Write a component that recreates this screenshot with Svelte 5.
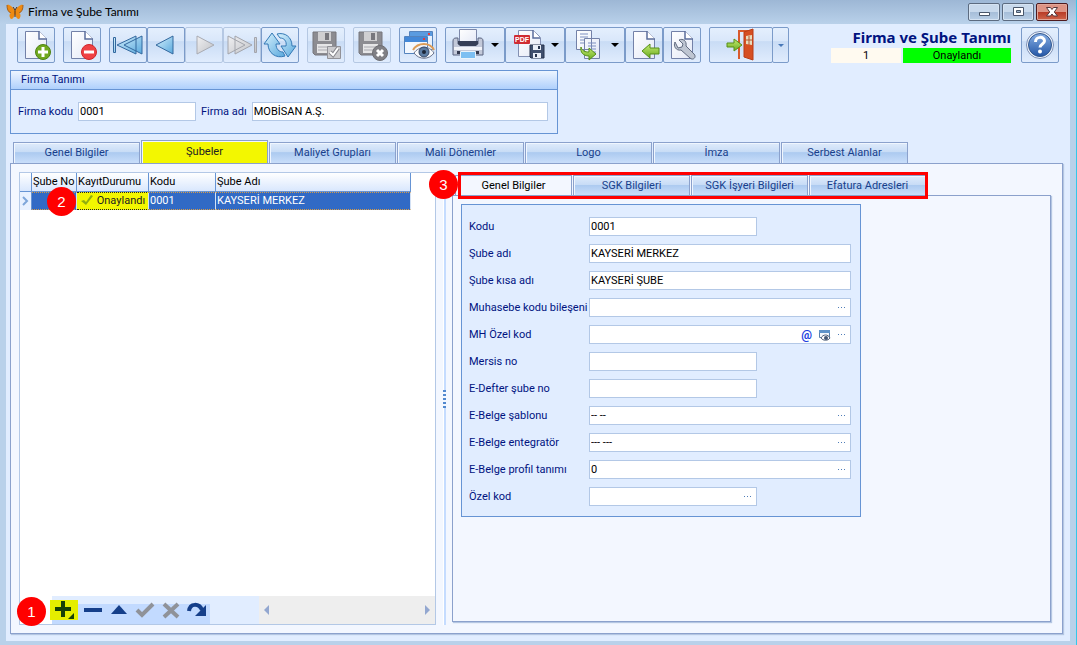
<script>
	const tabs = ['Genel Bilgiler', 'Şubeler', 'Maliyet Grupları', 'Mali Dönemler', 'Logo', 'İmza', 'Serbest Alanlar'];
	const subTabs = ['Genel Bilgiler', 'SGK Bilgileri', 'SGK İşyeri Bilgileri', 'Efatura Adresleri'];

	let activeTab = $state('Şubeler');
	let activeSubTab = $state('Genel Bilgiler');

	let company = $state({ code: '0001', name: 'MOBİSAN A.Ş.' });

	let fields = $state([
		{ id: 'kodu', label: 'Kodu', value: '0001', short: true },
		{ id: 'sube-adi', label: 'Şube adı', value: 'KAYSERİ MERKEZ' },
		{ id: 'sube-kisa', label: 'Şube kısa adı', value: 'KAYSERİ ŞUBE' },
		{ id: 'muhasebe', label: 'Muhasebe kodu bileşeni', value: '', lookup: true },
		{ id: 'mh-ozel', label: 'MH Özel kod', value: '', lookup: true, extra: true },
		{ id: 'mersis', label: 'Mersis no', value: '', short: true },
		{ id: 'e-defter', label: 'E-Defter şube no', value: '', short: true },
		{ id: 'sablon', label: 'E-Belge şablonu', value: '-- --', lookup: true },
		{ id: 'entegrator', label: 'E-Belge entegratör', value: '--- ---', lookup: true },
		{ id: 'profil', label: 'E-Belge profil tanımı', value: '0', lookup: true },
		{ id: 'ozel-kod', label: 'Özel kod', value: '', short: true, lookup: true }
	]);
</script>

{#snippet page()}
	<path d="M6.500 3.500h14l7 7v20h-21z" fill="url(#paper)" stroke="#7381a8" />
	<path d="M20 3v8h8" fill="#fff" stroke="#5b6d9c" stroke-width="1.500" />
{/snippet}

{#snippet floppy()}
	<path d="M2 3h23v23H4l-2-2z" fill="#8c8c91" stroke="#77777d" />
	<path d="M7 3h13v9H7z" fill="#cfcfd1" />
	<path d="M14 4h4v7h-4z" fill="#77777d" />
	<path d="M6 15h15v9H6z" fill="#e6e6e7" />
	<path d="M7 18h13M7 21h13" stroke="#aaaab0" />
{/snippet}

<svg class="defs" width="0" height="0" aria-hidden="true">
	<defs>
		<linearGradient id="paper" x1="0" y1="0" x2="1" y2="1">
			<stop offset="0" stop-color="#fff" />
			<stop offset="1" stop-color="#e3e8f6" />
		</linearGradient>
		<linearGradient id="blue" x1="0" y1="0" x2="1" y2="1">
			<stop offset="0" stop-color="#d9f2fd" />
			<stop offset="1" stop-color="#58a8dd" />
		</linearGradient>
		<linearGradient id="grey" x1="0" y1="0" x2="1" y2="1">
			<stop offset="0" stop-color="#f0f0f2" />
			<stop offset="1" stop-color="#bfc1c6" />
		</linearGradient>
		<linearGradient id="green" x1="0" y1="0" x2="0" y2="1">
			<stop offset="0" stop-color="#c6ec73" />
			<stop offset="1" stop-color="#69ab1f" />
		</linearGradient>
		<linearGradient id="help" x1="0" y1="0" x2="0" y2="1">
			<stop offset="0" stop-color="#86aee4" />
			<stop offset="1" stop-color="#2456a6" />
		</linearGradient>
	</defs>
</svg>

<div class="window">
	<header class="titlebar">
		<svg width="18" height="16" viewBox="0 0 18 16">
			<path d="M9 7C7 3 3 0 1 1c0 4 1 7 4 8-2 1-2 4 0 6 2 0 3-2 4-5 1 3 2 5 4 5 2-2 2-5 0-6 3-1 4-4 4-8-2-1-6 2-8 6z" fill="#ee8a13" />
			<path d="M1 1c0 4 1 7 4 8M17 1c0 4-1 7-4 8" fill="none" stroke="#a4601c" />
			<path d="M9 6v7M9 6L7 3M9 6l2-3" stroke="#4a2e18" />
		</svg>
		<h1>Firma ve Şube Tanımı</h1>
		<div class="window-buttons">
			<button aria-label="Küçült"><svg width="16" height="12"><path d="M3.500 6.500h10v3h-10z" fill="#fff" stroke="#48566a" /></svg></button>
			<button aria-label="Ekranı kapla"><svg width="16" height="12"><path d="M3.500 1.500h10v8h-10z" fill="#fff" stroke="#48566a" /><path d="M6.500 4.500h4v2h-4z" fill="#9fb6cf" stroke="#48566a" /></svg></button>
			<button class="close" aria-label="Kapat"><svg width="16" height="12"><path d="M2.500 1.500h4L8 3.500l1.500-2h4L10.300 6l3.200 4h-4L8 8l-1.500 2h-4L5.700 6z" fill="#fff" stroke="#55363a" /></svg></button>
		</div>
	</header>

	<main class="client">
		<div class="toolbar">
			<button class="tool" aria-label="Yeni">
				<svg width="34" height="34">
					{@render page()}
					<circle cx="24" cy="24" r="7.500" fill="#70a81f" stroke="#4d8212" />
					<path d="M24 19v10M19 24h10" stroke="#fff" stroke-width="3" />
				</svg>
			</button>
			<button class="tool" aria-label="Sil">
				<svg width="34" height="34">
					{@render page()}
					<circle cx="24" cy="24" r="7.500" fill="#ef4144" stroke="#cf2429" />
					<path d="M19 24h10" stroke="#fff" stroke-width="3" />
				</svg>
			</button>
			<div class="tool-group">
				<button class="tool" aria-label="İlk kayıt">
					<svg width="34" height="34" fill="url(#blue)" stroke="#33689e" stroke-linejoin="round">
						<path d="M2.500 9.500h2v15h-2zM25 8v18L6 17zM31 8v18L13 17z" />
					</svg>
				</button>
				<button class="tool" aria-label="Önceki kayıt">
					<svg width="34" height="34"><path d="M24 8v18L7 17z" fill="url(#blue)" stroke="#33689e" stroke-linejoin="round" /></svg>
				</button>
				<button class="tool" disabled aria-label="Sonraki kayıt">
					<svg width="34" height="34"><path d="M10 8v18l17-9z" fill="url(#grey)" stroke="#a9abb2" stroke-linejoin="round" /></svg>
				</button>
				<button class="tool" disabled aria-label="Son kayıt">
					<svg width="34" height="34" fill="url(#grey)" stroke="#a3a5ac" stroke-linejoin="round">
						<path d="M29.500 9.500h2v15h-2zM3 8v18l17-9zM10 8v18l17-9z" />
					</svg>
				</button>
				<button class="tool" aria-label="Yenile">
					<svg width="34" height="34" fill="url(#blue)" stroke="#3479b5" stroke-linejoin="round">
						<path d="M9 5l8 11h-4c0 5 3 8 7 8l2 4C13 31 5 25 5 16H1z" />
						<path d="M25 29l8-11h-4c0-9-7-14-15-12l3 4c4 0 7 3 6 8h-5z" />
					</svg>
				</button>
			</div>
			<button class="tool" disabled aria-label="Kaydet">
				<svg width="34" height="34">
					<g transform="translate(2 1)">{@render floppy()}</g>
					<path d="M18.500 18.500h13v12h-13z" fill="#cbcbce" stroke="#929298" />
					<path d="M21 24l3 3 5-7" fill="none" stroke="#88888e" stroke-width="4" />
					<path d="M21 24l3 3 5-7" fill="none" stroke="#fff" stroke-width="2" />
				</svg>
			</button>
			<button class="tool" disabled aria-label="Vazgeç">
				<svg width="34" height="34">
					<g transform="translate(2 1)">{@render floppy()}</g>
					<circle cx="25" cy="25" r="7.500" fill="#808085" stroke="#6e6e73" />
					<path d="M22 22l6 6M28 22l-6 6" stroke="#fff" stroke-width="3" />
				</svg>
			</button>
			<button class="tool" aria-label="İzle">
				<svg width="34" height="34">
					<path d="M8.500 3.500h23v18h-23z" fill="#e8f1fd" stroke="#5483bd" />
					<path d="M9 4h22v4H9z" fill="#5a9be0" />
					<path d="M3.500 8.500h23v17h-23z" fill="#f2f7fe" stroke="#5483bd" />
					<path d="M4 9h22v5H4z" fill="#4388d8" />
					<path d="M27 5h2v2h-2zM22 10h2v2h-2z" fill="#e43c3f" />
					<path d="M13 25c5-7 15-8 20 0-5 7-15 7-20 0z" fill="#f8fafc" stroke="#68718a" />
					<path d="M12 22c5-8 17-8 21 0" fill="none" stroke="#dc9c57" stroke-width="2" />
					<circle cx="23" cy="24" r="5" fill="#5d7da3" stroke="#364969" />
					<circle cx="23" cy="24" r="2" fill="#1c2638" />
				</svg>
			</button>
			<div class="tool-group">
				<button class="tool wide" aria-label="Yazdır">
					<svg width="34" height="34">
						<path d="M8.500 1.500h17v14h-17z" fill="url(#paper)" stroke="#7d88a9" />
						<path d="M2 13c0-2 1-3 3-3h2v6h20v-6h2c2 0 3 1 3 3v14H2z" fill="#c3c9d9" stroke="#59637f" />
						<path d="M7 13h20v3l-2 2H9l-2-2z" fill="#363f56" />
						<path d="M3 19h28v3H3z" fill="#f2f4f9" />
						<path d="M6 23h22v3H6z" fill="#343b50" />
						<path d="M9.500 23.500h15v7h-15z" fill="#7cbff2" stroke="#e9f3fb" />
					</svg>
					<span class="caret"></span>
				</button>
				<button class="tool wide" aria-label="PDF kaydet">
					<svg width="34" height="34">
						<path d="M7.500 2.500h15l7 7v19h-22z" fill="url(#paper)" stroke="#8390b3" />
						<path d="M22 2v8h7" fill="#fff" stroke="#5b6d9c" stroke-width="1.500" />
						<rect x="3" y="7" width="16" height="9" rx="1" fill="#cf2c32" />
						<text x="11" y="14" class="pdf">PDF</text>
						<path d="M19 17h14v13H20l-1-1z" fill="#40506e" stroke="#26334c" />
						<path d="M22 17h8v5h-8zM22 25h8v5h-8z" fill="#e9eef7" />
						<path d="M27 18h2v3h-2zM24 26h2v3h-2z" fill="#26334c" />
					</svg>
					<span class="caret"></span>
				</button>
				<button class="tool wide" aria-label="Kopyala">
					<svg width="34" height="34">
						<path d="M5.500 2.500h15v19h-15zM13.500 10.500h15v20h-15z" fill="url(#paper)" stroke="#7381a8" />
						<path d="M9 6h8M9 9h8M9 12h4M9 15h4M17 15h8M17 18h8M20 21h5M22 24h3" stroke="#7d8fc0" />
						<path d="M10 19c1 4 4 5 8 5v-4l7 6-7 6v-4c-6 0-9-4-8-9z" fill="url(#green)" stroke="#568f18" />
					</svg>
					<span class="caret"></span>
				</button>
				<button class="tool" aria-label="İçeri al">
					<svg width="34" height="34">
						{@render page()}
						<path d="M15 23l8-7v4h9v6h-9v4z" fill="url(#green)" stroke="#568f18" />
					</svg>
				</button>
				<button class="tool" aria-label="Ayarlar">
					<svg width="34" height="34">
						{@render page()}
						<path d="M10 14c-2 4 1 9 6 8l9 8c3 3 7-1 4-4l-8-8c1-5-3-8-7-6l4 4-1 3-4 1z" fill="#bfc6d2" stroke="#626c80" stroke-linejoin="round" />
					</svg>
				</button>
			</div>
			<div class="tool-group">
				<button class="tool exit" aria-label="Çıkış">
					<svg width="34" height="34">
						<path d="M15 31V3h14" fill="none" stroke="#d95a2c" stroke-width="2" />
						<path d="M20 4l9-3v31l-9-3z" fill="#d64f22" stroke="#b93d17" />
						<path d="M22 8l6-1v10l-6-1z" fill="#e9dcbd" />
						<path d="M25 8v9M22 12h6" stroke="#b2552e" />
						<path d="M3 15h7v-4l8 6-8 6v-4H3z" fill="url(#green)" stroke="#568f18" />
					</svg>
				</button>
				<button class="tool drop" aria-label="Çıkış seçenekleri"><span class="caret small"></span></button>
			</div>

			<div class="status">
				<strong>Firma ve Şube Tanımı</strong>
				<div class="status-cells">
					<span class="number">1</span>
					<span class="state">Onaylandı</span>
				</div>
			</div>
			<button class="tool" aria-label="Yardım">
				<svg width="34" height="34">
					<circle cx="17" cy="17" r="13.500" fill="#f4f7fc" stroke="#7b8fb5" />
					<circle cx="17" cy="17" r="11.500" fill="url(#help)" stroke="#31578f" />
					<path d="M12.500 14c0-6 9-6 9-1 0 3-4.500 3-4.500 6.500" fill="none" stroke="#fff" stroke-width="3" />
					<circle cx="17" cy="23.500" r="2" fill="#fff" />
				</svg>
			</button>
		</div>

		<section class="company">
			<h2>Firma Tanımı</h2>
			<div class="company-fields">
				<label for="firma-kodu">Firma kodu</label>
				<input id="firma-kodu" class="code" bind:value={company.code} />
				<label for="firma-adi">Firma adı</label>
				<input id="firma-adi" bind:value={company.name} />
			</div>
		</section>

		<nav class="tabs">
			{#each tabs as tab}
				<button class="tab" class:marked={tab === activeTab} onclick={() => (activeTab = tab)}>{tab}</button>
			{/each}
		</nav>

		<div class="panel">
			<section class="branches">
				<table>
					<thead>
						<tr>
							<th class="indicator"></th>
							<th class="no">Şube No</th>
							<th class="record">KayıtDurumu</th>
							<th class="kod">Kodu</th>
							<th class="ad">Şube Adı</th>
						</tr>
					</thead>
					<tbody>
						<tr>
							<td class="indicator">
								<svg width="8" height="10"><path d="M2 1l4 4-4 4" fill="none" stroke="#7ea6da" stroke-width="2" /></svg>
							</td>
							<td><span class="step step-two">2</span></td>
							<td class="approved">
								<svg width="14" height="12"><path d="M1 7l3-1 2 2 5-7 2 1-7 9z" fill="#8fae10" /></svg>
								Onaylandı
							</td>
							<td>0001</td>
							<td>KAYSERİ MERKEZ</td>
						</tr>
					</tbody>
				</table>

				<footer class="grid-footer">
					<span class="step step-one">1</span>
					<div class="navigator">
						<button class="add" aria-label="Ekle"><svg width="22" height="20"><path d="M2 9h16M10 1v16" stroke="#174007" stroke-width="4" /><path d="M21 13v6h-6z" fill="#174007" /></svg></button>
						<button aria-label="Çıkar"><svg width="22" height="20"><path d="M2 10h18" stroke="#153f8a" stroke-width="4" /></svg></button>
						<button aria-label="Düzenle"><svg width="22" height="20"><path d="M3 14l8-9 8 9z" fill="#153f8a" /></svg></button>
						<button aria-label="Onayla" disabled><svg width="22" height="20"><path d="M3 10l5 5 11-11" fill="none" stroke="#8f9299" stroke-width="4" /></svg></button>
						<button aria-label="İptal" disabled><svg width="22" height="20"><path d="M4 4l14 13M18 4L4 17" stroke="#8f9299" stroke-width="4" /></svg></button>
						<button aria-label="Yenile"><svg width="22" height="20"><path d="M3 11c1-8 10-8 13-1" fill="none" stroke="#153f8a" stroke-width="4" /><path d="M20 5v11H9z" fill="#153f8a" /></svg></button>
					</div>
					<div class="scrollbar">
						<button aria-label="Sola kaydır"><svg width="8" height="12"><path d="M6 1v10L1 6z" fill="#93a7d0" /></svg></button>
						<button aria-label="Sağa kaydır"><svg width="8" height="12"><path d="M2 1v10l5-5z" fill="#93a7d0" /></svg></button>
					</div>
				</footer>
			</section>

			<div class="splitter"><span></span></div>

			<section class="detail">
				<nav class="tabs sub">
					{#each subTabs as tab}
						<button class="tab" class:active={tab === activeSubTab} onclick={() => (activeSubTab = tab)}>{tab}</button>
					{/each}
					<span class="outline"></span>
					<span class="step step-three">3</span>
				</nav>
				<div class="detail-body">
					<form class="fields">
						{#each fields as field}
							<div class="field">
								<label for={field.id}>{field.label}</label>
								<div class="box" class:short={field.short}>
									<input id={field.id} bind:value={field.value} />
									{#if field.extra}
										<button type="button" class="at" aria-label="Adres">@</button>
										<button type="button" aria-label="İncele">
											<svg width="13" height="12">
												<path d="M1.500 1.500h10v7h-10z" fill="#f2f7fd" stroke="#5880ab" />
												<path d="M1 1h11v3H1z" fill="#5f93c9" />
												<path d="M3 9c2-4 7-4 9 0-2 3-7 3-9 0z" fill="#fff" stroke="#526078" />
												<circle cx="8" cy="9" r="2" fill="#425573" />
											</svg>
										</button>
									{/if}
									{#if field.lookup}
										<button type="button" aria-label="Seç">
											<svg width="9" height="3" fill="#4f7db8"><path d="M1 1h1v1H1zM4 1h1v1H4zM7 1h1v1H7z" /></svg>
										</button>
									{/if}
								</div>
							</div>
						{/each}
					</form>
				</div>
			</section>
		</div>
	</main>
</div>

<style>
	:global(body) {
		font-family: Roboto, 'Liberation Sans', sans-serif;
		font-size: 11px;
		line-height: 14px;
		color: #000;
	}

	button,
	input {
		font: inherit;
		color: inherit;
		margin: 0;
		padding: 0;
		box-sizing: border-box;
	}

	button {
		display: flex;
		align-items: center;
		justify-content: center;
		border: none;
		background: none;
	}

	svg {
		display: block;
		flex: none;
	}

	.defs {
		position: absolute;
	}

	.window {
		box-sizing: border-box;
		display: flex;
		flex-direction: column;
		min-height: 100vh;
		padding: 0 6px 4px;
		border-right: 1px solid #35c8ea;
		background: linear-gradient(#9db7d5, #b9d1ea 24px, #b9d1ea);
	}

	.titlebar {
		display: flex;
		align-items: center;
		gap: 4px;
		height: 24px;
	}

	h1 {
		flex: 1;
		margin: 0;
		font: 12px/24px Lato, sans-serif;
	}

	.window-buttons {
		display: flex;
		align-self: flex-start;
		gap: 2px;
		padding: 3px 2px 0 0;
	}

	.window-buttons button {
		width: 32px;
		height: 18px;
		border: 1px solid #5c6b80;
		border-radius: 2px;
		background: linear-gradient(#c8d9ec 50%, #a5bdd8 50%, #b9cfe6);
		box-shadow: inset 0 0 0 1px #d5e3f2;
	}

	.window-buttons .close {
		border-color: #4e1a1e;
		background: linear-gradient(#dd9384 50%, #b83a25 50%, #d0664c);
		box-shadow: inset 0 0 0 1px #e1a698;
	}

	.client {
		flex: 1;
		display: flex;
		flex-direction: column;
		padding: 3px 7px 7px 4px;
		background: #e1edff;
	}

	.toolbar {
		display: flex;
		gap: 8px;
		padding: 0 4px 0 7px;
	}

	.tool-group {
		display: flex;
	}

	.tool {
		flex: none;
		width: 38px;
		height: 36px;
		border: 1px solid #7b9bc9;
		border-radius: 2px;
		background: linear-gradient(#e4effd, #d9e7fa 38%, #c9dcf5 40%, #e0ecfd);
	}

	.tool:disabled {
		border-color: #b5c8e3;
	}

	.tool.wide {
		width: 60px;
		gap: 6px;
	}

	.tool.exit {
		width: 64px;
	}

	.tool.drop {
		width: 17px;
		margin-left: -1px;
	}

	.pdf {
		fill: #fff;
		font: bold 7px 'Liberation Sans', sans-serif;
		text-anchor: middle;
	}

	.caret {
		border: 4px solid transparent;
		border-top-color: #000;
		border-bottom: none;
	}

	.caret.small {
		border-width: 3px;
		border-bottom: none;
		border-top-color: #4878b8;
	}

	.status {
		display: flex;
		flex-direction: column;
		align-items: flex-end;
		margin-left: auto;
		margin-right: 2px;
	}

	.status strong {
		font: bold 15px/21px 'Noto Sans', sans-serif;
		color: #00137f;
	}

	.status-cells {
		display: flex;
		gap: 2px;
		text-align: center;
		line-height: 15px;
	}

	.status-cells .number {
		width: 70px;
		background: #fffaf0;
	}

	.status-cells .state {
		width: 108px;
		background: #0f0;
	}

	.company {
		width: 52%;
		box-sizing: border-box;
		height: 64px;
		margin-top: 7px;
		border: 1px solid #6694d4;
		color: #00137f;
	}

	h2 {
		margin: 0;
		padding-left: 10px;
		border-bottom: 1px solid #6694d4;
		background: linear-gradient(#edf5ff, #afd0fc);
		font: inherit;
		line-height: 18px;
	}

	.company-fields {
		display: flex;
		align-items: center;
		gap: 5px;
		padding: 12px 9px 12px 7px;
	}

	.company-fields input {
		flex: 1;
		min-width: 0;
		height: 19px;
		padding: 0 1px;
		border: 1px solid #b3c8e6;
		background: #fff;
		color: #000;
	}

	.company-fields .code {
		flex: none;
		width: 118px;
	}

	.tabs {
		display: flex;
		align-items: flex-end;
		gap: 1px;
		height: 29px;
		padding-left: 3px;
	}

	.tab {
		width: 127px;
		height: 21px;
		border: 1px solid #8ba1cc;
		border-bottom: none;
		background: linear-gradient(#dfebfb, #c8dcf6 45%, #accaf0 48%, #c9defa);
		box-shadow: inset 1px 1px #f0f6fe;
		color: #183f8c;
	}

	.tab.marked {
		height: 23px;
		background: #f3f700;
		color: #222;
	}

	.panel {
		flex: 1;
		display: flex;
		padding: 8px 11px 8px 8px;
		border: 1px solid #8ba1cc;
		background: #f3f7ff;
		box-shadow: 1px 1px 1px #b4c6e2;
	}

	.branches {
		flex: none;
		width: 417px;
		box-sizing: border-box;
		display: flex;
		flex-direction: column;
		justify-content: space-between;
		border: 1px solid #b3c8e6;
		background: #fff;
	}

	table {
		width: 391px;
		table-layout: fixed;
		border-collapse: separate;
		border-spacing: 0;
	}

	th,
	td {
		box-sizing: border-box;
		overflow: visible;
		padding: 0 1px;
		text-align: left;
		font-weight: normal;
		white-space: nowrap;
	}

	th {
		height: 19px;
		border-right: 1px solid #6694d4;
		border-bottom: 1px solid #6694d4;
		background: linear-gradient(#fff, #d9e7fd);
	}

	th.indicator {
		width: 12px;
	}

	th.no {
		width: 45px;
	}

	th.record {
		width: 72px;
	}

	th.kod {
		width: 67px;
	}

	td {
		position: relative;
		height: 18px;
		border-right: 1px solid #d3e1f5;
		border-top: 1px dotted #d79b45;
		border-bottom: 1px dotted #d79b45;
		background: #316ac5;
		color: #fff;
	}

	td.indicator {
		border: none;
		border-right: 1px solid #6694d4;
		background: #e8f1ff;
	}

	td.approved {
		border-color: #222;
		border-right-color: #d3e1f5;
		background: #f3f700;
		color: #222;
	}

	.approved svg {
		display: inline-block;
		margin-left: 2px;
		vertical-align: -2px;
	}

	.step {
		position: absolute;
		display: flex;
		align-items: center;
		justify-content: center;
		width: 29px;
		height: 29px;
		border-radius: 50%;
		background: #f00;
		color: #fff;
		font: 15px 'Liberation Sans', sans-serif;
	}

	.step-two {
		top: -6px;
		right: 0;
	}

	.step-one {
		top: 1px;
		left: -3px;
	}

	.step-three {
		top: -2px;
		left: -23px;
	}

	.grid-footer {
		position: relative;
		display: flex;
		height: 28px;
		padding-left: 32px;
	}

	.navigator {
		flex: 1;
		display: flex;
		align-items: center;
		gap: 4px;
		background: linear-gradient(#e1edff 30%, #c2daff 30%);
		background-size: 158px 100%;
		background-repeat: no-repeat;
		background-color: #e1edff;
	}

	.navigator button {
		width: 22px;
		height: 20px;
	}

	.navigator .add {
		width: 28px;
		margin-left: -2px;
		background: #e5ee00;
	}

	.scrollbar {
		display: flex;
		align-items: center;
		justify-content: space-between;
		width: 46%;
		box-sizing: border-box;
		padding: 0 4px;
		background: #eee;
	}

	.splitter {
		flex: none;
		display: flex;
		align-items: center;
		width: 3px;
		margin: 0 6px 0 7px;
		background: linear-gradient(90deg, #fff 1px, #c5dcff 1px);
	}

	.splitter span {
		width: 3px;
		height: 18px;
		background: repeating-linear-gradient(#5188cf 0 2px, #f3f7ff 2px 4px);
	}

	.detail {
		flex: 1;
		display: flex;
		flex-direction: column;
		margin-bottom: 3px;
	}

	.tabs.sub {
		position: relative;
		height: 23px;
	}

	.sub .tab {
		width: 117px;
		height: 20px;
	}

	.sub .tab.active {
		background: #f3f7ff;
		color: #000;
	}

	.outline {
		position: absolute;
		top: 0;
		left: 6px;
		width: 464px;
		height: 21px;
		border: 3px solid #f00;
	}

	.detail-body {
		flex: 1;
		display: flex;
		align-items: flex-start;
		padding: 8px;
		border: 1px solid #8ba1cc;
		box-shadow: 1px 1px 1px #b4c6e2;
	}

	.fields {
		box-sizing: border-box;
		width: 400px;
		display: flex;
		flex-direction: column;
		gap: 8px;
		padding: 12px 9px 10px 7px;
		border: 1px solid #6694d4;
		background: #e1edff;
	}

	.field {
		display: flex;
		align-items: center;
	}

	.field label {
		flex: none;
		width: 120px;
		color: #00137f;
	}

	.box {
		flex: 1;
		box-sizing: border-box;
		display: flex;
		align-items: center;
		gap: 6px;
		height: 19px;
		padding-right: 4px;
		border: 1px solid #b3c8e6;
		background: #fff;
	}

	.box.short {
		flex: none;
		width: 168px;
	}

	.box input {
		flex: 1;
		min-width: 0;
		padding: 0 1px;
		border: none;
		background: none;
	}

	.at {
		color: #1c3fe0;
		font-weight: bold;
		font-size: 12px;
	}
</style>
